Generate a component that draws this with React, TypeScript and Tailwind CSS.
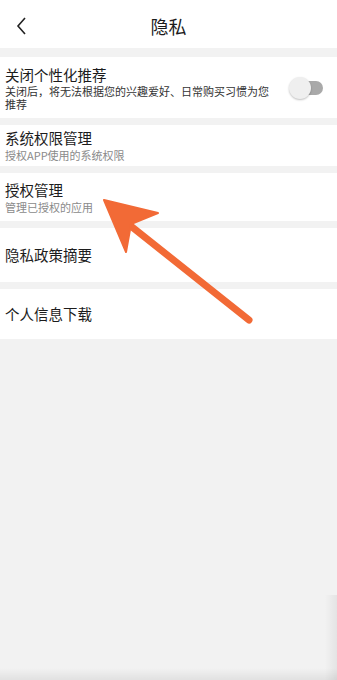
import type { ReactNode } from 'react';

// ─── Row ──────────────────────────────────────────────────

interface RowProps {
  title: string;
  subtitle?: ReactNode;
  right?: ReactNode;
  className?: string;
}

function Row({ title, subtitle, right, className = '' }: RowProps) {
  return (
    <div className={`flex items-center bg-white pl-[5px] pr-[14px] ${className}`}>
      <div className="flex min-w-0 flex-1 flex-col">
        <span className="text-[14.5px] leading-[20px] text-[#1c1c1c]">{title}</span>
        {subtitle}
      </div>
      {right}
    </div>
  );
}

function Toggle() {
  return (
    <div className="relative ml-1 h-[22px] w-[34px] shrink-0">
      <div className="absolute right-0 top-[4px] h-[14px] w-[22px] rounded-full bg-[#a9a9a9]" />
      <div className="absolute left-0 top-0 h-[22px] w-[22px] rounded-full bg-[#efefef] shadow-[0_1px_2px_rgba(0,0,0,0.25)]" />
    </div>
  );
}

// ─── App ──────────────────────────────────────────────────

export default function App() {
  return (
    <div
      className="relative flex h-[680px] w-[337px] flex-col overflow-hidden bg-[#f2f2f2]"
      style={{ fontFamily: '"Noto Sans CJK SC", "Noto Sans", sans-serif' }}
    >
      {/* header */}
      <div className="relative flex h-[48px] shrink-0 items-center justify-center bg-white pt-[5px]">
        <svg className="absolute left-[15px] top-[16px]" width="14" height="20" viewBox="0 0 14 20">
          <path d="M10 2 L3 10 L10 18" fill="none" stroke="#222" strokeWidth="1.6" />
        </svg>
        <span className="text-[18px] text-[#1c1c1c]">隐私</span>
      </div>

      <div className="flex flex-col gap-[7px] pt-[9px]">
        <Row
          className="h-[61px]"
          title="关闭个性化推荐"
          subtitle={
            <span className="w-[274px] text-[11px] leading-[12.5px] text-[#333]">
              关闭后，将无法根据您的兴趣爱好、日常购买习惯为您推荐
            </span>
          }
          right={<Toggle />}
        />
        <Row
          className="h-[41px]"
          title="系统权限管理"
          subtitle={<span className="text-[11px] leading-[15px] text-[#8a8a8a]">授权APP使用的系统权限</span>}
        />
        <Row
          className="h-[48px]"
          title="授权管理"
          subtitle={<span className="text-[11px] leading-[15px] text-[#8a8a8a]">管理已授权的应用</span>}
        />
        <Row className="h-[54px]" title="隐私政策摘要" />
        <Row className="h-[50px]" title="个人信息下载" />
      </div>

      {/* annotation arrow */}
      <svg className="pointer-events-none absolute left-0 top-0" width="337" height="680" viewBox="0 0 337 680">
        <path d="M127 223 L249 320" stroke="#f26a36" strokeWidth="7" strokeLinecap="round" />
        <path d="M104 200 L158 213 L131 224 L126 252 Z" fill="#f26a36" stroke="#f26a36" strokeWidth="2" strokeLinejoin="round" />
      </svg>

      {/* watermark shadow */}
      <div className="pointer-events-none absolute bottom-0 right-0 h-[12px] w-[337px] bg-gradient-to-b from-transparent to-[rgba(0,0,0,0.07)]" />
      <div className="pointer-events-none absolute bottom-0 right-0 h-[85px] w-[12px] bg-gradient-to-r from-transparent to-[rgba(0,0,0,0.06)]" />
    </div>
  );
}
